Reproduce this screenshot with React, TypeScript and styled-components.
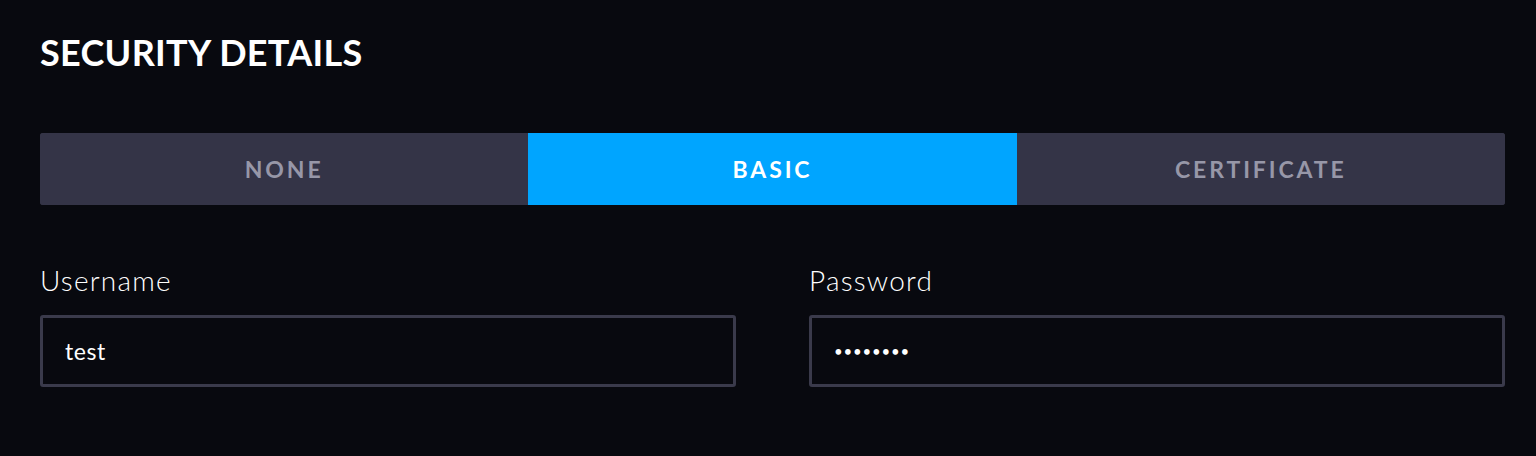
import styled, { createGlobalStyle } from "styled-components";
import { useState } from "react";

const GlobalStyle = createGlobalStyle`
  html, body {
    margin: 0;
    padding: 0;
    background: #08090f;
    font-family: "Lato", "Open Sans", sans-serif;
    color: #ffffff;
  }
`;

const Page = styled.div`
  display: flex;
  flex-direction: column;
  padding: 31px 31px 0 40px;
  height: 456px;
  box-sizing: border-box;
`;

const Title = styled.h2`
  margin: 0;
  font-size: 36px;
  font-weight: 700;
  letter-spacing: 0.3px;
  line-height: 42px;
`;

const Tabs = styled.div`
  display: grid;
  grid-template-columns: repeat(3, 1fr);
  margin-top: 60px;
  height: 72px;
  border-radius: 3px;
  overflow: hidden;
  background: #343447;
`;

const Tab = styled.button<{ $active: boolean }>`
  border: 0;
  margin: 0;
  padding: 0;
  font-family: "Lato", "Open Sans", sans-serif;
  font-size: 23px;
  font-weight: 700;
  letter-spacing: 2.9px;
  cursor: pointer;
  background: ${(p) => (p.$active ? "#00a5ff" : "#343447")};
  color: ${(p) => (p.$active ? "#ffffff" : "#9797a8")};
`;

const Fields = styled.div`
  display: grid;
  grid-template-columns: 1fr 1fr;
  column-gap: 73px;
  margin-top: 58px;
`;

const Field = styled.label`
  display: flex;
  flex-direction: column;
  gap: 18px;
`;

const Label = styled.span`
  font-size: 28px;
  font-weight: 300;
  line-height: 34px;
  letter-spacing: 1.2px;
  color: #ffffff;
`;

const Input = styled.input<{ $dots?: boolean }>`
  height: 72px;
  box-sizing: border-box;
  border: 3px solid #3a3a4b;
  border-radius: 3px;
  background: #08090f;
  color: #ffffff;
  padding: 0 22px;
  font-family: "Lato", "Open Sans", sans-serif;
  font-size: ${(p) => (p.$dots ? "15px" : "23px")};
  letter-spacing: ${(p) => (p.$dots ? "0.8px" : "0.6px")};
  outline: none;
`;

const options = ["NONE", "BASIC", "CERTIFICATE"];

export default function App() {
  const [mode, setMode] = useState("BASIC");
  const [user, setUser] = useState("test");
  const [pass, setPass] = useState("password");

  return (
    <Page>
      <GlobalStyle />
      <Title>SECURITY DETAILS</Title>
      <Tabs>
        {options.map((o) => (
          <Tab key={o} $active={mode === o} onClick={() => setMode(o)}>
            {o}
          </Tab>
        ))}
      </Tabs>
      <Fields>
        <Field>
          <Label>Username</Label>
          <Input value={user} onChange={(e) => setUser(e.target.value)} />
        </Field>
        <Field>
          <Label>Password</Label>
          <Input
            type="password"
            $dots
            value={pass}
            onChange={(e) => setPass(e.target.value)}
          />
        </Field>
      </Fields>
    </Page>
  );
}
